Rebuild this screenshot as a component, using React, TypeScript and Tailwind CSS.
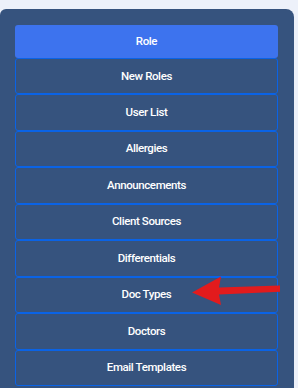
const items = [
  "New Roles",
  "User List",
  "Allergies",
  "Announcements",
  "Client Sources",
  "Differentials",
  "Doc Types",
  "Doctors",
  "Email Templates",
];

export default function App() {
  return (
    <div className="relative h-[388px] w-[298px] overflow-hidden bg-[#edf1fa] pt-[9px] font-['Roboto','Liberation_Sans',Arial,sans-serif]">
      {/* PANEL */}
      <div className="w-[294px] rounded-tr-[8px] rounded-tl-[6px] bg-[#36537e] px-[15px] pr-[16px] pt-[16px] pb-6">
        <div className="flex h-[33px] items-center justify-center rounded-[3px] bg-[#3d73ee] text-[11.5px] font-medium tracking-[-0.4px] text-white">
          Role
        </div>
        {items.map((label) => (
          <div
            key={label}
            className="flex h-[36.44px] items-center justify-center rounded-[3px] border border-[#0a63e6] text-[11.5px] font-medium tracking-[-0.4px] text-white"
          >
            {label}
          </div>
        ))}
      </div>

      {/* ARROW */}
      <svg
        className="absolute left-0 top-0"
        width="298"
        height="388"
        viewBox="0 0 298 388"
      >
        <polygon
          points="192,292.5 221,276.5 219,287.5 280,285.5 280,291.8 219,294.5 221,305"
          fill="#e21b1d"
        />
      </svg>
    </div>
  );
}
